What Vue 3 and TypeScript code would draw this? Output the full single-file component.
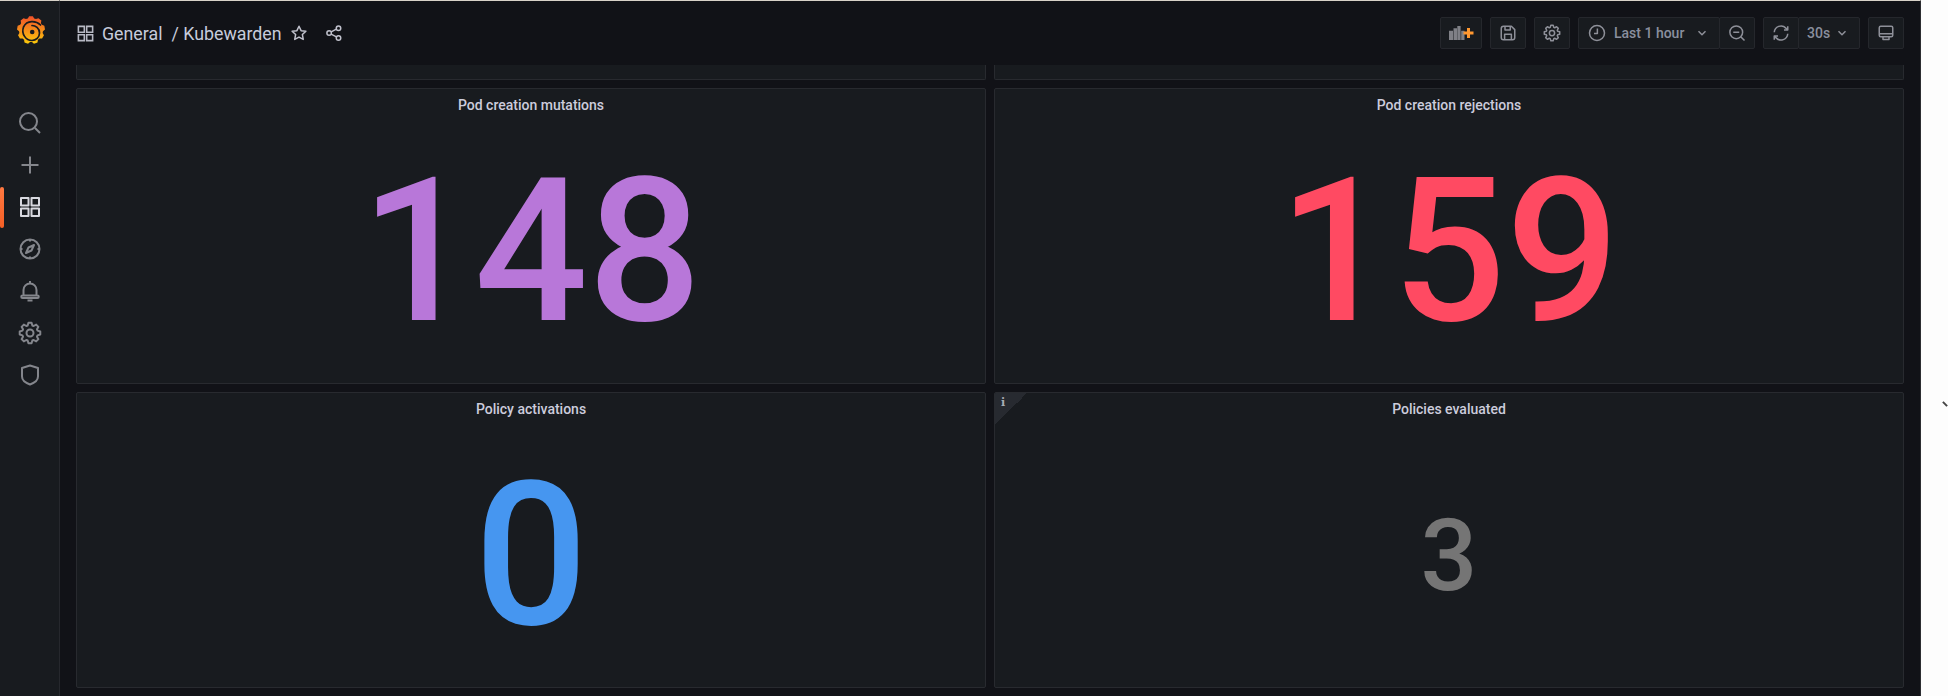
<script setup lang="ts">
interface Panel {
  title: string
  value: string
  color: string
  size: number
  info?: boolean
}

const panels: Panel[] = [
  { title: 'Pod creation mutations', value: '148', color: '#b877d9', size: 200 },
  { title: 'Pod creation rejections', value: '159', color: '#ff4a62', size: 200 },
  { title: 'Policy activations', value: '0', color: '#4696f0', size: 200 },
  { title: 'Policies evaluated', value: '3', color: '#757575', size: 100, info: true }
]

// toothed ring, used for the cog icons and the logo outline
function gearPath(cx: number, cy: number, teeth: number, outer: number, inner: number): string {
  const pts: string[] = []
  const half = Math.PI / teeth
  for (let i = 0; i < teeth; i++) {
    const a = (i * 2 * Math.PI) / teeth - Math.PI / 2
    const steps: [number, number][] = [
      [inner, -half / 1.3],
      [outer, -half / 2.6],
      [outer, half / 2.6],
      [inner, half / 1.3]
    ]
    for (const [r, d] of steps) {
      pts.push(`${(cx + r * Math.cos(a + d)).toFixed(2)} ${(cy + r * Math.sin(a + d)).toFixed(2)}`)
    }
  }
  return 'M' + pts.join('L') + 'z'
}

const cog = gearPath(12, 12, 8, 10.4, 7.9)
const logoOutline = gearPath(14, 14, 9, 14, 12)
</script>

<template>
  <div class="window">
    <aside class="sidemenu">
      <div class="logo">
        <svg width="28" height="28" viewBox="0 0 28 28">
          <defs>
            <linearGradient id="gf" x1="0" y1="1" x2="0" y2="0">
              <stop offset="0" stop-color="#fbca0a" />
              <stop offset="1" stop-color="#f0502a" />
            </linearGradient>
          </defs>
          <path fill="url(#gf)" :d="logoOutline" />
          <path fill="none" stroke="#181b1f" stroke-width="1.700" stroke-linecap="round" d="M23.500 9C19 4.500 10 4 6.500 11 4 18 9 24.500 15 24.500 19 24.500 22.500 21.500 22.500 17 22.500 12 18.500 9.500 15 9.500" />
          <circle cx="15.200" cy="16" r="2.300" fill="#181b1f" />
        </svg>
      </div>
      <nav class="nav">
        <a class="nav-item">
          <svg viewBox="0 0 24 24"><circle cx="10.500" cy="10.500" r="8.500" /><path d="M17 17l5 5" /></svg>
        </a>
        <a class="nav-item">
          <svg viewBox="0 0 24 24"><path d="M12 3.500v17M3.500 12h17" /></svg>
        </a>
        <a class="nav-item active">
          <svg viewBox="0 0 24 24"><path d="M3 3h7.500v7.500H3zM13.500 3H21v7.500h-7.500zM3 13.500h7.500V21H3zM13.500 13.500H21V21h-7.500z" /></svg>
        </a>
        <a class="nav-item">
          <svg viewBox="0 0 24 24"><circle cx="12" cy="12" r="9.500" /><path d="M16 8l-2.500 5.500L8 16l2.500-5.500z" /><path d="M12 2.500v2M12 19.500v2M2.500 12h2M19.500 12h2" /></svg>
        </a>
        <a class="nav-item">
          <svg viewBox="0 0 24 24"><path d="M5.500 16.500V11a6.500 6.500 0 0 1 13 0v5.500M12 4.500V2M4.500 16.500h15a1 1 0 0 1 0 2.500h-15a1 1 0 0 1 0-2.500zM9.500 21.500h5" /></svg>
        </a>
        <a class="nav-item">
          <svg viewBox="0 0 24 24"><circle cx="12" cy="12" r="3.500" /><path :d="cog" /></svg>
        </a>
        <a class="nav-item">
          <svg viewBox="0 0 24 24"><path d="M12 2.500l8 2.500v8.500c0 3.500-4 6.500-8 8-4-1.500-8-4.500-8-8V5z" /></svg>
        </a>
      </nav>
    </aside>

    <main class="main">
      <header class="navbar">
        <svg class="crumb-icon" viewBox="0 0 24 24"><path d="M3 3h7.500v7.500H3zM13.500 3H21v7.500h-7.500zM3 13.500h7.500V21H3zM13.500 13.500H21V21h-7.500z" /></svg>
        <span class="crumb">General</span>
        <span class="crumb slash">/ Kubewarden</span>
        <svg class="head-icon star" viewBox="0 0 24 24"><path d="M12 3l2.800 5.900 6.400.8-4.700 4.400 1.200 6.400L12 17.400l-5.700 3.100 1.200-6.400-4.700-4.400 6.400-.8z" /></svg>
        <svg class="head-icon share" viewBox="0 0 24 24"><circle cx="18" cy="5.500" r="3" /><circle cx="5.500" cy="12" r="3" /><circle cx="18" cy="18.500" r="3" /><path d="M8.200 10.600l7-3.700M8.200 13.400l7 3.700" /></svg>

        <div class="tools">
          <button class="btn add">
            <svg viewBox="0 0 26 16">
              <path fill="#7f8086" d="M1 5.700h4V15H1zM5.500 3.300H9V15H5.500zM9.300 1h3.300v14H9.300zM13.200 5.700h3.300V15h-3.300z" />
              <path fill="#ff9830" d="M19 3h3v3.500h3.500v3H22V13h-3V9.500h-3.500v-3H19z" />
            </svg>
          </button>
          <button class="btn square">
            <svg viewBox="0 0 24 24"><path d="M6 3h10.500L21 7.500V18a3 3 0 0 1-3 3H6a3 3 0 0 1-3-3V6a3 3 0 0 1 3-3zM8 3v5h7V3M7.500 21v-7.500h9V21" /></svg>
          </button>
          <button class="btn square">
            <svg viewBox="0 0 24 24"><circle cx="12" cy="12" r="3.500" /><path :d="cog" /></svg>
          </button>
          <div class="group">
            <button class="btn time">
              <svg viewBox="0 0 24 24"><circle cx="12" cy="12" r="10" /><path d="M12.500 6v6.500H8" /></svg>
              <span class="time-label">Last 1 hour</span>
              <svg class="chev" viewBox="0 0 24 24"><path d="M6 9l6 6 6-6" /></svg>
            </button>
            <button class="btn square">
              <svg viewBox="0 0 24 24"><circle cx="11" cy="11" r="8.500" /><path d="M17 17l5 5M7 11h8" /></svg>
            </button>
          </div>
          <div class="group">
            <button class="btn square">
              <svg viewBox="0 0 24 24"><path d="M3 11a9 9 0 0 1 15.500-5.500L21 8M21 3v5h-5M21 13a9 9 0 0 1-15.500 5.500L3 16M3 21v-5h5" /></svg>
            </button>
            <button class="btn interval">
              <span>30s</span>
              <svg class="chev" viewBox="0 0 24 24"><path d="M6 9l6 6 6-6" /></svg>
            </button>
          </div>
          <button class="btn square">
            <svg viewBox="0 0 24 24"><path d="M5 3h14a2 2 0 0 1 2 2v10a2 2 0 0 1-2 2H5a2 2 0 0 1-2-2V5a2 2 0 0 1 2-2zM3 13h18M8 17v3.500h8V17" /></svg>
          </button>
        </div>
      </header>

      <section class="dashboard">
        <div class="stub"></div>
        <div class="stub"></div>
        <article v-for="p in panels" :key="p.title" class="panel">
          <span v-if="p.info" class="corner"><i>i</i></span>
          <h2 class="panel-title">{{ p.title }}</h2>
          <div class="panel-value" :style="{ color: p.color, fontSize: p.size + 'px' }">{{ p.value }}</div>
        </article>
      </section>
    </main>

    <div class="outside">
      <span class="cursor"></span>
    </div>
  </div>
</template>

<style scoped>
.window {
  display: flex;
  width: 1948px;
  height: 696px;
  overflow: hidden;
  font-family: Roboto, "Liberation Sans", sans-serif;
  background: #fdfdfd;
}

.sidemenu {
  flex: 0 0 60px;
  box-sizing: border-box;
  border-top: 1px solid #d8d2c8;
  border-right: 1px solid #26282d;
  background: #181b1f;
}

.logo {
  display: flex;
  justify-content: center;
  padding: 15px 0 0 2px;
  height: 101px;
  box-sizing: border-box;
}

.nav {
  display: flex;
  flex-direction: column;
}

.nav-item {
  display: flex;
  align-items: center;
  justify-content: center;
  height: 42px;
  position: relative;
}

.nav-item svg {
  width: 24px;
  height: 24px;
  fill: none;
  stroke: #84868c;
  stroke-width: 2;
  stroke-linejoin: round;
}

.nav-item.active svg {
  stroke: #d8d9e0;
}

.nav-item.active::before {
  content: "";
  position: absolute;
  left: 0;
  top: 1px;
  width: 4px;
  height: 41px;
  border-radius: 2px;
  background: linear-gradient(#ff7941, #f55f25);
}

.main {
  flex: 0 0 1861px;
  display: flex;
  flex-direction: column;
  min-width: 0;
  box-sizing: border-box;
  border-top: 1px solid #d8d2c8;
  border-right: 1px solid #2c2d31;
  background: #111217;
}

.navbar {
  display: flex;
  align-items: center;
  height: 64px;
  flex: none;
  padding: 0 16px;
  box-sizing: border-box;
  background: #111217;
  color: #ccccdc;
}

.crumb-icon {
  width: 19px;
  height: 19px;
  margin-right: 7px;
  fill: none;
  stroke: #b8b9c4;
  stroke-width: 2;
}

.crumb {
  font-size: 17.800px;
  color: #c6cbdc;
}

.slash {
  margin-left: 9px;
}

.head-icon {
  width: 18px;
  height: 18px;
  fill: none;
  stroke: #c0c1cc;
  stroke-width: 2;
  stroke-linejoin: round;
}

.star {
  margin-left: 8px;
}

.share {
  margin-left: 17px;
}

.tools {
  display: flex;
  gap: 8px;
  margin-left: auto;
}

.group {
  display: flex;
}

.group .btn + .btn {
  margin-left: -1px;
}

.btn {
  display: flex;
  align-items: center;
  justify-content: center;
  height: 32px;
  padding: 0;
  box-sizing: border-box;
  border: 1px solid #25272c;
  border-radius: 2px;
  background: #181b1f;
  color: #8a8f9e;
  font: 500 14px Roboto, "Liberation Sans", sans-serif;
}

.btn svg {
  width: 18px;
  height: 18px;
  fill: none;
  stroke: #8e9099;
  stroke-width: 2;
  stroke-linejoin: round;
}

.btn.add {
  width: 42px;
}

.btn.add svg {
  width: 26px;
  height: 16px;
  stroke: none;
}

.btn.square {
  width: 36px;
}

.btn.time {
  width: 142px;
  justify-content: flex-start;
  padding-left: 9px;
}

.time-label {
  margin-left: 8px;
}

.btn.time .chev {
  margin-left: 11px;
}

.btn.interval {
  width: 62px;
  justify-content: flex-start;
  padding-left: 8px;
}

.btn.interval .chev {
  margin-left: 5px;
}

.btn .chev {
  width: 14px;
  height: 14px;
  stroke-width: 2.500;
}

.dashboard {
  flex: 1;
  display: grid;
  grid-template-columns: 1fr 1fr;
  grid-template-rows: 15px 296px 296px;
  gap: 8px;
  padding: 0 16px 0 16px;
  min-height: 0;
}

.stub {
  background: #181b1f;
  border: 1px solid #282a2f;
  border-top: 0;
  border-radius: 0 0 2px 2px;
}

.panel {
  position: relative;
  display: flex;
  flex-direction: column;
  box-sizing: border-box;
  overflow: hidden;
  background: #181b1f;
  border: 1px solid #282a2f;
  border-radius: 2px;
}

.corner {
  position: absolute;
  left: 0;
  top: 0;
  width: 32px;
  height: 32px;
  background: linear-gradient(135deg, #272a30 50%, transparent 50%);
}

.corner i {
  position: absolute;
  left: 6px;
  top: 3px;
  font: 700 11px "DejaVu Serif", serif;
  color: #a9adb5;
}

.panel-title {
  margin: 0;
  height: 32px;
  line-height: 32px;
  flex: none;
  text-align: center;
  font-size: 14px;
  font-weight: 500;
  color: #ccccdc;
}

.panel-value {
  flex: 1;
  display: flex;
  align-items: center;
  justify-content: center;
  font-weight: 500;
  line-height: 1;
  padding-bottom: 1px;
}

.outside {
  flex: 1;
  position: relative;
}

.cursor {
  position: absolute;
  left: 21px;
  top: 403px;
  width: 6px;
  height: 2px;
  background: #444;
  transform: rotate(45deg);
}
</style>

<style>
html,
body {
  margin: 0;
  background: #fdfdfd;
}
</style>
